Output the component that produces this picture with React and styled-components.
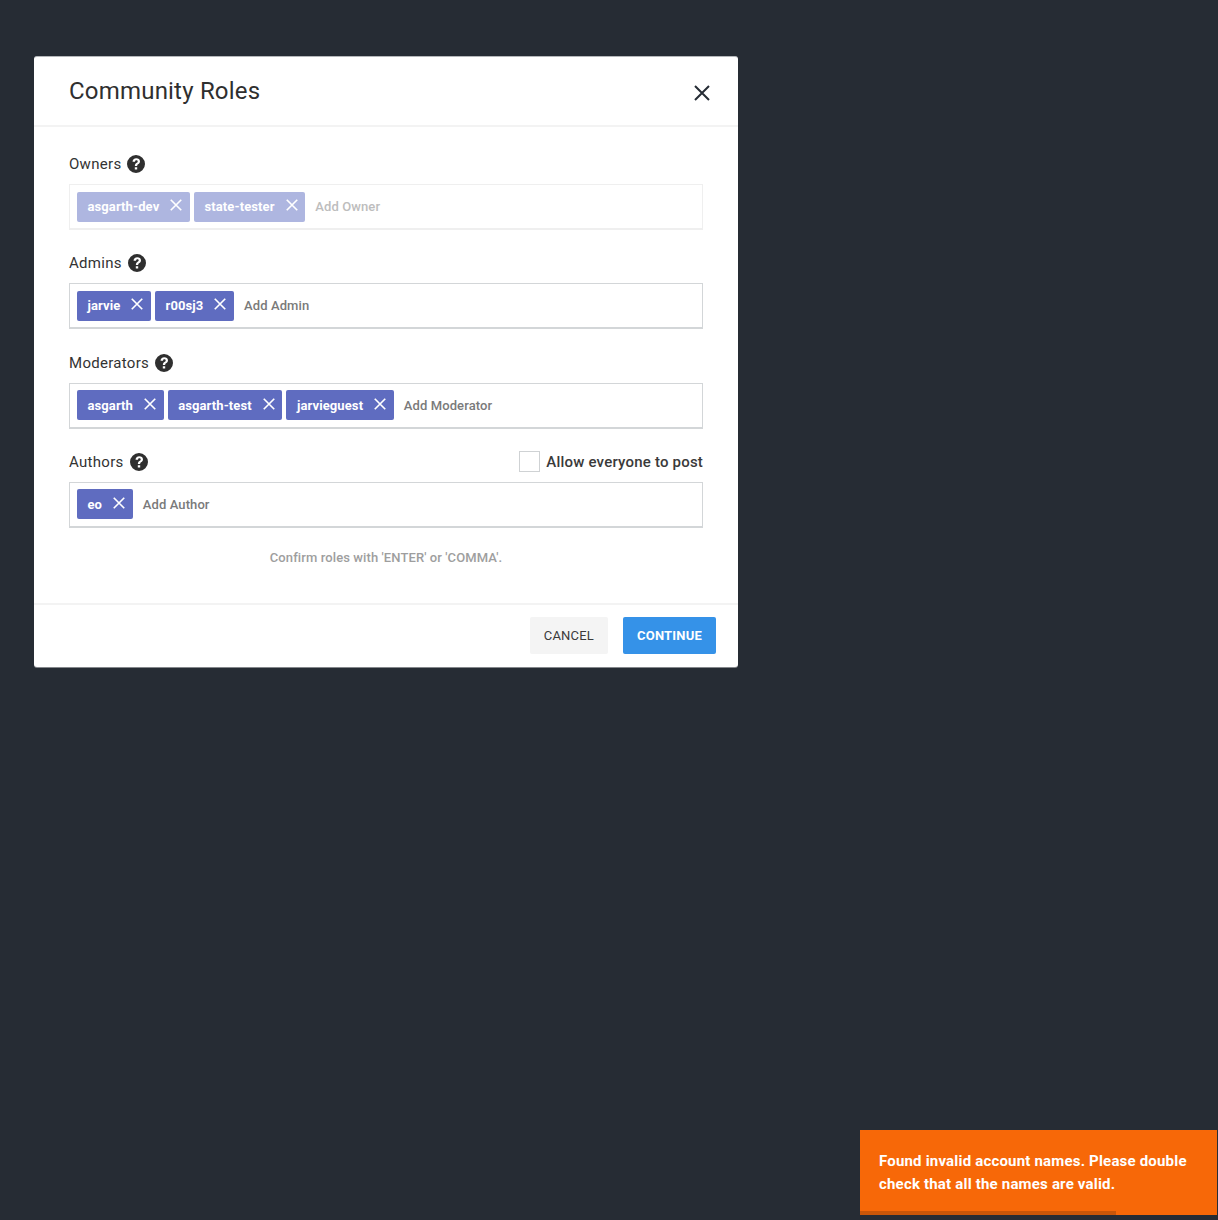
import React from 'react';
import styled, { createGlobalStyle } from 'styled-components';

const GlobalStyle = createGlobalStyle`
  html, body {
    margin: 0;
    padding: 0;
    height: 100%;
    background: #262c34;
    font-family: Roboto, "Liberation Sans", sans-serif;
  }
`;

const Page = styled.div`
  position: relative;
  box-sizing: border-box;
  width: 1218px;
  height: 1220px;
  padding: 56px 0 0 34px;
  overflow: hidden;
`;

////////// modal //////////

const Modal = styled.div`
  width: 704px;
  height: 611px;
  display: flex;
  flex-direction: column;
  background: #fff;
  border-top: 1px solid #b4b7ba;
  border-radius: 3px;
  box-sizing: border-box;
  box-shadow: 0 1px 0 #84878b;
`;

const Header = styled.div`
  height: 70px;
  box-sizing: border-box;
  padding: 0 26px 0 35px;
  display: flex;
  justify-content: space-between;
  border-bottom: 2px solid #f3f3f3;
`;

const Title = styled.h2`
  margin: 18px 0 0;
  font-size: 24px;
  line-height: 32px;
  font-weight: 400;
  letter-spacing: 0.2px;
  color: #2f2f2f;
`;

const CloseIcon = styled.svg`
  width: 16px;
  height: 16px;
  margin: 28px 2px 0 0;
  stroke: #262c35;
  stroke-width: 2;
  fill: none;
`;

const Body = styled.div`
  flex: 1;
  padding: 26px 35px 0;
`;

const Field = styled.div`
  margin-bottom: 22.33px;
`;

const LabelRow = styled.div`
  height: 22px;
  margin-bottom: 9px;
  display: flex;
  align-items: center;
  justify-content: space-between;
`;

const Label = styled.div`
  display: flex;
  align-items: center;
  gap: 6px;
  font-size: 15px;
  letter-spacing: 0.3px;
  color: #333;
`;

const HelpIcon = styled.svg`
  width: 18px;
  height: 18px;
  fill: #2f2f2f;
`;

const TagBox = styled.div`
  height: 46px;
  box-sizing: border-box;
  padding: 0 7px;
  display: flex;
  align-items: center;
  gap: 4px;
  background: #fff;
  border: 1px solid ${p => (p.$muted ? '#efefef' : '#d3d6d8')};
  border-bottom-width: 2px;
`;

const Tag = styled.div`
  height: 30px;
  box-sizing: border-box;
  padding: 0 7.7px 0 10.5px;
  display: flex;
  align-items: center;
  gap: 11px;
  border-radius: 2px;
  background: ${p => (p.$muted ? '#aeb6e0' : '#5f6cc0')};
  color: #fff;
  font-size: 13px;
  font-weight: 700;
  letter-spacing: 0.1px;
`;

const TagClose = styled.svg`
  width: 12px;
  height: 12px;
  margin-top: -3px;
  stroke: #fff;
  stroke-width: 2.2;
  fill: none;
`;

const AddText = styled.span`
  margin-left: 6px;
  font-size: 13px;
  font-weight: 500;
  letter-spacing: 0.1px;
  color: ${p => (p.$muted ? '#bdbdbd' : '#7a7a7a')};
`;

const CheckRow = styled.div`
  display: flex;
  align-items: center;
  gap: 6px;
  font-size: 15px;
  font-weight: 500;
  letter-spacing: 0.2px;
  color: #3a3a3a;
`;

const CheckBox = styled.div`
  width: 21px;
  height: 21px;
  box-sizing: border-box;
  background: #fff;
  border: 1px solid #cfd2d4;
`;

const Hint = styled.div`
  margin-top: 2px;
  text-align: center;
  font-size: 13px;
  font-weight: 500;
  letter-spacing: 0.1px;
  color: #9e9e9e;
`;

const Footer = styled.div`
  height: 64px;
  box-sizing: border-box;
  padding: 12px 22px 0 0;
  display: flex;
  justify-content: flex-end;
  gap: 15px;
  border-top: 2px solid #f3f3f3;
`;

const Button = styled.button`
  height: 37px;
  padding: 0 14px;
  border: 0;
  border-radius: 2px;
  font-family: Roboto, "Liberation Sans", sans-serif;
  font-size: 13px;
  font-weight: ${p => (p.$primary ? 700 : 400)};
  letter-spacing: 0.2px;
  background: ${p => (p.$primary ? '#3592e8' : '#f4f4f4')};
  color: ${p => (p.$primary ? '#fff' : '#3a3a3a')};
`;

////////// toast //////////

const Toast = styled.div`
  position: absolute;
  left: 860px;
  top: 1130px;
  width: 357px;
  height: 85px;
  box-sizing: border-box;
  padding: 20px 19px 0;
  background: #f76808;
  color: #fff;
  font-size: 15px;
  font-weight: 700;
  letter-spacing: 0.19px;
  line-height: 23px;
`;

const ToastBar = styled.div`
  position: absolute;
  left: 0;
  bottom: 0;
  height: 4px;
  background: #c95609;
`;

////////// bits //////////

const Help = () => (
  <HelpIcon viewBox="0 0 24 24">
    <path d="M12 0a12 12 0 1 0 0 24 12 12 0 0 0 0-24zm1.6 19.3h-3.2v-3h3.2v3zm3.100-8.700c-.5.8-1.200 1.300-1.900 1.800-.9.600-1.200 1.100-1.200 2.200h-3.100c0-1.900.6-3 2-3.900.9-.6 1.800-1.100 1.800-2.200 0-.9-.7-1.500-1.700-1.500-1.100 0-1.800.7-1.900 1.900H7.400c.1-2.900 2-4.600 5-4.600 2.800 0 4.900 1.500 4.900 4 0 .9-.2 1.700-.6 2.300z" />
  </HelpIcon>
);

const Cross = ({ as: Icon }) => (
  <Icon viewBox="0 0 16 16">
    <path d="M1 1l14 14M15 1L1 15" />
  </Icon>
);

const TagInput = ({ tags, placeholder, muted }) => (
  <TagBox $muted={muted}>
    {tags.map(t => (
      <Tag key={t} $muted={muted}>
        {t}
        <Cross as={TagClose} />
      </Tag>
    ))}
    <AddText $muted={muted}>{placeholder}</AddText>
  </TagBox>
);

const roles = [
  { label: 'Owners', tags: ['asgarth-dev', 'state-tester'], placeholder: 'Add Owner', muted: true },
  { label: 'Admins', tags: ['jarvie', 'r00sj3'], placeholder: 'Add Admin' },
  { label: 'Moderators', tags: ['asgarth', 'asgarth-test', 'jarvieguest'], placeholder: 'Add Moderator' },
  { label: 'Authors', tags: ['eo'], placeholder: 'Add Author', allowAll: true },
];

const App = () => (
  <Page>
    <GlobalStyle />
    <Modal>
      <Header>
        <Title>Community Roles</Title>
        <Cross as={CloseIcon} />
      </Header>
      <Body>
        {roles.map(r => (
          <Field key={r.label}>
            <LabelRow>
              <Label>
                {r.label}
                <Help />
              </Label>
              {r.allowAll && (
                <CheckRow>
                  <CheckBox />
                  Allow everyone to post
                </CheckRow>
              )}
            </LabelRow>
            <TagInput tags={r.tags} placeholder={r.placeholder} muted={r.muted} />
          </Field>
        ))}
        <Hint>Confirm roles with 'ENTER' or 'COMMA'.</Hint>
      </Body>
      <Footer>
        <Button>CANCEL</Button>
        <Button $primary>CONTINUE</Button>
      </Footer>
    </Modal>
    <Toast>
      Found invalid account names. Please double check that all the names are valid.
      <ToastBar style={{ width: '256px' }} />
    </Toast>
  </Page>
);

export default App;
